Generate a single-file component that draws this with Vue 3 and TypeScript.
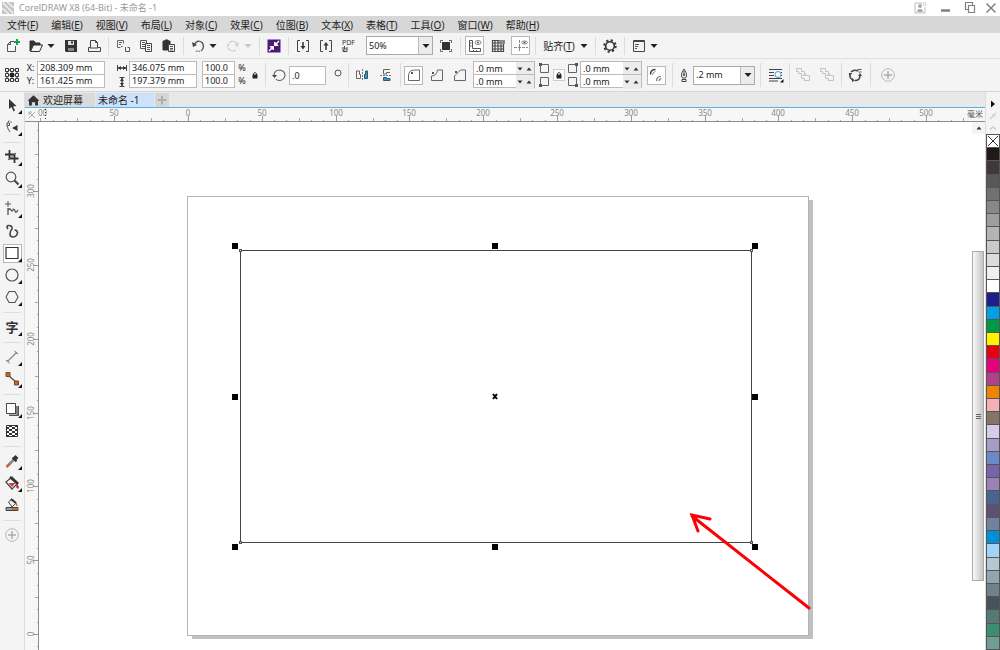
<script setup lang="ts">
import { ref } from 'vue'

interface Item {
  kind: 'icon' | 'arrow' | 'sep'
  icon?: string
  label?: string
  on?: boolean
  dim?: boolean
}
interface Tool {
  icon?: string
  label?: string
  fly?: boolean
}

const menus = [
  ['文件', 'F'], ['编辑', 'E'], ['视图', 'V'], ['布局', 'L'], ['对象', 'C'], ['效果', 'C'],
  ['位图', 'B'], ['文本', 'X'], ['表格', 'T'], ['工具', 'O'], ['窗口', 'W'], ['帮助', 'H'],
]

const icons: Record<string, string> = {
  logo: '<rect x="2" y="2" width="12" height="12" fill="#c4c4c4"/><path d="M3 3l10 10M7 2l7 6M2 8l7 6" stroke="#f2f2f2" stroke-width="1.6"/>',
  user: '<path d="M3 3h7M3 3v10h10V7" stroke="#bdbdbd"/><circle cx="8" cy="6" r="2" fill="#aaa" stroke="none"/><path d="M5 12q0-3 3-3t3 3z" fill="#aaa" stroke="none"/><circle cx="12.500" cy="4" r="1.500" stroke="#ccc"/>',
  min: '<path d="M4 10.500h9" stroke="#808080" stroke-width="2.500"/>',
  restore: '<path d="M6 9.500H3.500v-7h7V5M6.500 5.500h6v7h-6z" stroke="#808080" stroke-width="1.200"/>',
  close: '<path d="M3.500 3.500l9 9M12.500 3.500l-9 9" stroke="#808080" stroke-width="1.500"/>',
  new: '<path d="M9 3.500H5.500L2.500 6.500v7h8V8M5.500 3.500v3h-3" stroke="#555"/><path d="M12 1v6M9 4h6" stroke="#19a349" stroke-width="2"/>',
  open: '<path d="M2 13V3h4l1.500 2H12v2H5z" fill="#333" stroke="#333"/><path d="M2.500 13.500l3-6.500h9l-3 6.500z" fill="#f5f5f5" stroke="#333"/>',
  save: '<path d="M2 2h12v12H3l-1-1z" fill="#333" stroke="none"/><path d="M5 3h6v4H5z" fill="#ddd" stroke="none"/><path d="M8 3.500h2v2H8z" fill="#333" stroke="none"/><path d="M5 10h6v3H5z" fill="#888" stroke="none"/>',
  print: '<path d="M4.500 9.500v-7h5l2 2v5M9.500 2.500v2h2M4.500 9.500h-2v4h12v-4h-3" stroke="#444"/><path d="M4 10h8" stroke="#444"/>',
  cut: '<path d="M2.500 2.500h6v3M2.500 2.500v7h3M4 4.500h3M4 6.500h2" stroke="#666"/><path d="M6 8.500h1.500M10.500 9v4.500h4V9.500h-2" stroke="#555"/>',
  copy: '<path d="M2.500 2.500h6v8h-6zM4 4.500h3M4 6.500h3M4 8.500h3" stroke="#555"/><path d="M7.500 5.500h6v8h-6z" fill="#f4f4f4" stroke="#444"/><path d="M9 7.500h3M9 9.500h3M9 11.500h3" stroke="#555"/>',
  paste: '<path d="M2 3h2V2h3v1h2v3H7v6H2z" fill="#333" stroke="#333"/><path d="M7.500 6.500h6v7h-6z" fill="#f4f4f4" stroke="#444"/><path d="M9 8.500h3M9 10.500h3M9 12h3" stroke="#555"/>',
  undo: '<path d="M4 6.500Q8 1 12 4.500q3 4 0 7.500" stroke="#555" stroke-width="1.400"/><path d="M12 12q-3 2.500-7 .5" stroke="#777" stroke-width="1.400" stroke-dasharray="1.500 1"/><path d="M2 4l1 5 4-2z" fill="#444" stroke="none"/>',
  redo: '<path d="M12 6Q8 1 4 5q-3 4 1 7 3 2 6 0" stroke="#ccc" stroke-width="1.400" stroke-dasharray="4 1"/><path d="M14 4l-1 5-4-2z" fill="#d4d4d4" stroke="none"/>',
  connect: '<path d="M1.500 1.500h13v13h-13z" fill="#4b1a78" stroke="none"/><path d="M13 3L9.500 6.500M3 13l3.500-3.500" stroke="#fff" stroke-width="1.500"/><path d="M8.500 4v3.500H12zM7.500 12V8.500H4z" fill="#fff" stroke="#fff"/>',
  import: '<path d="M5 2.500H2.500v11H5M11 2.500h2.500v11H11" stroke="#444"/><path d="M8 4v6" stroke="#333" stroke-width="1.500"/><path d="M5.500 8h5L8 11.500z" fill="#333" stroke="none"/>',
  export: '<path d="M5 2.500H2.500v11H5M11 2.500h2.500v11H11" stroke="#444"/><path d="M8 6v6" stroke="#333" stroke-width="1.500"/><path d="M5.500 7.500h5L8 4z" fill="#333" stroke="none"/>',
  pdf: '<text x="1" y="7" font-size="7" font-family="Noto Sans" fill="#333" stroke="none">PDF</text><path d="M2 9v4.500h4V9M3.500 8v3h2M3 13V11.500" stroke="#444"/>',
  full: '<path d="M4 4h8v8H4z" fill="#333" stroke="none"/><path d="M2.500 5V2.500H5M11 2.500h2.500V5M2.500 11v2.500H5M11 13.500h2.500V11" stroke="#666"/>',
  ruler: '<path d="M2.500 2.500h3v8h8v3h-11z" stroke="#555"/><path d="M3 5h1.500M3 8h1.500M6.500 12v1.500M9.500 12v1.500" stroke="#555"/><ellipse cx="11" cy="4.500" rx="3" ry="2" stroke="#888"/><circle cx="11" cy="4.500" r="1" fill="#555" stroke="none"/>',
  grid: '<path d="M2.500 2.500h11v11h-11zM5 2v12M8 2v12M11 2v12M2 5h12M2 8h12M2 11h12" stroke="#4a4a4a" stroke-width="1.200"/><path d="M9 2h6v4H9z" fill="#888" stroke="none"/>',
  guides: '<path d="M6.500 2v12M1 9.500h14" stroke="#888" stroke-dasharray="3 1"/><ellipse cx="11.500" cy="4.500" rx="3" ry="1.500" stroke="#888"/><circle cx="11.500" cy="4.500" r="1" fill="#555" stroke="none"/>',
  gear: '<circle cx="8" cy="8" r="4.300" stroke="#333" stroke-width="1.600"/><circle cx="8" cy="8" r="5.800" stroke="#333" stroke-width="1.800" stroke-dasharray="2.200 2.355"/>',
  window: '<path d="M2.500 2.500h11v11h-11z" stroke="#444"/><path d="M2 3.500h12" stroke="#444"/><path d="M4 6.500h4M4 8.500h3M4 10.500h2" stroke="#555"/>',
  origin: '<path d="M3 3h10v10H3zM8 3v10M3 8h10" stroke="#333"/><path d="M1.500 1.500h3v3h-3zM6.500 1.500h3v3h-3zM11.500 1.500h3v3h-3zM1.500 6.500h3v3h-3zM11.500 6.500h3v3h-3zM1.500 11.500h3v3h-3zM6.500 11.500h3v3h-3zM11.500 11.500h3v3h-3z" fill="#f4f4f4" stroke="#333"/><path d="M6 6h4v4H6z" fill="#222" stroke="none"/>',
  lock: '<path d="M5.500 7.500h5v4h-5z" fill="#222" stroke="none"/><path d="M6.500 8V6.500q1.500-2 3 0V8" stroke="#333"/>',
  rotate: '<path d="M3 9q0-6 6-6 5 1 5 5.500-1 5-6 5-2 0-3-1.500" stroke="#666" stroke-width="1.200"/><path d="M1 8h5l-2.500 3z" fill="#444" stroke="none"/>',
  mirrorH: '<path d="M2.500 4v7.500h4v-4h-1V4z" stroke="#666"/><path d="M8.500 2v12" stroke="#777" stroke-dasharray="2 1"/><path d="M13.500 4v7.500h-3v-4h1V4z" fill="#2d9ad6" stroke="#33566e"/>',
  mirrorV: '<path d="M12 2.500H5.500V7h3V5.500H12" stroke="#666"/><path d="M2 8.500h12" stroke="#777" stroke-dasharray="2 1"/><path d="M12 13.500H5.500v-3h3v1H12z" fill="#2d9ad6" stroke="#33566e"/>',
  round: '<path d="M2.500 13.500V9q0-6 6-6h5v10.500z" stroke="#666"/><path d="M5 5h2v2H5z" fill="#555" stroke="none"/>',
  scallop: '<path d="M2.500 13.500V9q5 0 6-6h5v10.500z" stroke="#666"/><path d="M3 5h2v2H3z" fill="#555" stroke="none"/>',
  chamfer: '<path d="M2.500 13.500V9l6-6h5v10.500z" stroke="#666"/><path d="M3 4h2v2H3z" fill="#555" stroke="none"/>',
  relative: '<path d="M2.500 7.500q0-5 5-5" stroke="#444" stroke-width="1.600"/><path d="M4.500 8q0-3 3-3.500" stroke="#888"/><path d="M8.500 14q0-4.500 4.500-4.500M11 14q0-2 2.500-2.500" stroke="#777" stroke-width="1.200"/>',
  pen: '<path d="M8 2q-3 4-2.500 7l1 2h3l1-2Q11 6 8 2zM8 4v4M6 12.500h4v2H6z" stroke="#444"/><circle cx="8" cy="8" r="1" fill="#444" stroke="none"/>',
  wrap: '<path d="M1 2.500h13M1 5.500h5M1 8.500h5M1 11.500h13M1 14h9" stroke="#444" stroke-width="1.200"/><path d="M13 5.500h1M13 8.500h1" stroke="#444"/><circle cx="10" cy="7.500" r="3" fill="#fff" stroke="#39a0d5"/><path d="M15.500 12v3.500H12z" fill="#111" stroke="none"/>',
  combine: '<path d="M1.500 1.500h5v3h3v4h-3v-2h-3v-2h-2zM6.500 8.500h3v-2h1v2h4v5h-5v-2h-3z" stroke="#c2c2c2"/>',
  cycle: '<path d="M11 4Q7 2 4 5M3 7q-1 4 3 6M8 13.500q5 0 5-5" stroke="#444" stroke-width="1.500"/><path d="M10.500 2.500h4M11.500 5h3" stroke="#555"/><path d="M11 9h4l-2-3zM5 11v4l3-1.500zM1.500 6H5l-1.500 3z" fill="#444" stroke="none"/>',
  plus: '<circle cx="8" cy="8" r="6.300" stroke="#b5b5b5"/><path d="M8 4v8M4 8h8" stroke="#aaa" stroke-width="1.500"/>',
  pick: '<path d="M5 2v10l2.500-2 2 4.500 1.500-1-2-4 3.500-.500z" fill="#333" stroke="none"/>',
  shape: '<path d="M5 1.500Q1 7 6 13" stroke="#555"/><path d="M3 4h2.500v2.500H3z" fill="#f4f4f4" stroke="#555"/><path d="M8 9l5.500-3v6z" fill="#333" stroke="none"/><path d="M6 2.500l2 1" stroke="#777"/>',
  crop: '<path d="M5.500 1v8.500h9M1 5.500h9.500V14" stroke="#333" stroke-width="1.800"/><path d="M4 11L12 4" stroke="#555"/>',
  zoom: '<circle cx="7" cy="6" r="4.800" stroke="#555" stroke-width="1.200"/><path d="M10.500 9.500l4 4" stroke="#444" stroke-width="2.200"/>',
  freehand: '<path d="M4 0v6M1 3h6" stroke="#555"/><path d="M4 7v7M4 9q2-2 3 0t2 0 2 1 3-1" stroke="#555" stroke-width="1.300"/>',
  smear: '<path d="M4 6Q1.500 2.500 5 2.500q3.500 0 3 3.500-2 2-2 5 0 3 3 3 4-.500 4.500-4 0-3-3-3" stroke="#444" stroke-width="1.600"/>',
  rect: '<path d="M2 2.500h12v11H2z" fill="#fff" stroke="#333" stroke-width="1.200"/>',
  ellipse: '<circle cx="8" cy="8" r="6" stroke="#555" stroke-width="1.200"/>',
  polygon: '<path d="M5 2.500h6L14 8l-3 5.500H5L2 8z" stroke="#555" stroke-width="1.100"/>',
  dimension: '<path d="M3.500 12.500l9-9" stroke="#888" stroke-width="1.300"/><path d="M2 11l3.500 3M10.500 2L14 5" stroke="#666"/>',
  connector: '<path d="M4 4l9 8" stroke="#555" stroke-width="1.300"/><path d="M2 1.500h4v4H2zM10.500 10h4v4h-4z" fill="#c8692e" stroke="#804020"/>',
  shadow: '<path d="M5 5h10v10H5z" fill="#555" stroke="none"/><path d="M2.500 2.500h9v10h-9z" fill="#fff" stroke="#444"/><path d="M5 13.500h8V5" stroke="#aaa"/>',
  pattern: '<path d="M2.500 2.500h11v11h-11z" fill="#fff" stroke="#333"/><path d="M2 4h3v2H2zM8 4h3v2H8zM2 8h3v2H2zM8 8h3v2H8zM5 6h3v2H5zM11 6h3v2h-3zM5 10h3v2H5zM11 10h3v2h-3zM5 2h3v2H5zM11 2h3v2h-3zM2 12h3v2H2zM8 12h3v2H8z" fill="#333" stroke="none"/>',
  dropper: '<path d="M2.500 14L6 10.500" stroke="#c36437" stroke-width="2.500"/><path d="M5.500 11l5-5" stroke="#888" stroke-width="2.500"/><path d="M8.500 4.500l4 4" stroke="#333" stroke-width="2"/><path d="M10.500 6l2.500-2.500" stroke="#333" stroke-width="4"/>',
  fill: '<path d="M2 7l6-5 6 6-6 6z" fill="#fff" stroke="#444" stroke-width="1.200"/><path d="M6 2l8 7" stroke="#333" stroke-width="2.500"/><path d="M4.500 8h7L8 12z" fill="#d93344" stroke="none"/><path d="M13 9l2 3-1 2-2-2z" fill="#d0202c" stroke="none"/>',
  smart: '<path d="M4.500 5L8 2l4 4-4 4z" fill="#eee" stroke="#444"/><path d="M7 2l5 4" stroke="#333" stroke-width="2"/><path d="M12 6l1 3" stroke="#d06a20" stroke-width="1.500"/><path d="M2 10.500h12v3H2z" fill="#999" stroke="#444"/><path d="M8 11h5.500v2H8z" fill="#c8692e" stroke="none"/>',
  home: '<path d="M1 8l7-6.500L15 8l-1.500.500V14H10v-4H6v4H2.500V8.500z" fill="#333" stroke="none"/>',
  arrow: '<path d="M.5 6h7L4 10z" fill="#222" stroke="none"/>',
  up: '<path d="M1.500 7.500h5L4 4.500z" fill="#333" stroke="none"/>',
  down: '<path d="M1.500 4.500h5L4 7.500z" fill="#333" stroke="none"/>',
  width: '<path d="M1.500 3v6M10.500 3v6" stroke="#444"/><path d="M2 6h8" stroke="#444" stroke-width="1.500"/><path d="M2 6l3-2v4zM10 6L7 4v4z" fill="#333" stroke="none"/>',
  height: '<path d="M3.500 1.500h5M3.500 10.500h5" stroke="#444"/><path d="M6 2v8" stroke="#444" stroke-width="1.500"/><path d="M6 2L4 5h4zM6 10L4 7h4z" fill="#333" stroke="none"/>',
}

const s: Item = { kind: 'sep' }
const i = (icon: string, label: string, on = false, dim = false): Item => ({ kind: 'icon', icon, label, on, dim })
const a = (label: string, dim = false): Item => ({ kind: 'arrow', label, dim })

const barA: Item[] = [
  i('new', '新建'), i('open', '打开'), a('打开列表'), i('save', '保存'), i('print', '打印'), s,
  i('cut', '剪切'), i('copy', '复制'), i('paste', '粘贴'), s,
  i('undo', '撤消'), a('撤消列表'), i('redo', '重做'), a('重做列表', true), s,
  i('connect', '搜索内容'), s, i('import', '导入'), i('export', '导出'), i('pdf', '发布为 PDF'),
]
const barB: Item[] = [
  i('full', '全屏预览'), s, i('ruler', '显示标尺', true), i('grid', '显示网格'), i('guides', '显示辅助线', true), s,
]
const barC: Item[] = [
  a('贴齐列表'), s, i('gear', '选项'), s, i('window', '应用程序启动器'), a('启动器列表'),
]

const t = (icon: string, label: string, fly = true): Tool => ({ icon, label, fly })
const tools: Tool[] = [
  t('pick', '选择'), t('shape', '形状'), {}, t('crop', '裁剪'), t('zoom', '缩放'), {},
  t('freehand', '手绘'), t('smear', '艺术笔', false), t('rect', '矩形'), t('ellipse', '椭圆形'), t('polygon', '多边形'), {},
  t('text', '文本'), {}, t('dimension', '平行度量'), t('connector', '连接器'), {},
  t('shadow', '阴影'), t('pattern', '透明度', false), {},
  t('dropper', '颜色滴管'), t('fill', '交互式填充'), t('smart', '智能填充', false), {}, t('plus', '自定义', false),
]
const active = ref('rect')

const posX = ref('208.309 mm')
const posY = ref('161.425 mm')
const sizeW = ref('346.075 mm')
const sizeH = ref('197.379 mm')
const scaleX = ref('100.0')
const scaleY = ref('100.0')
const angle = ref('.0')
const radii = ref(['.0 mm', '.0 mm', '.0 mm', '.0 mm'])

const unit = 73.8
const hMajors = Array.from({ length: 12 }, (_, k) => k - 1).map((n) => ({ pos: Math.round(163 + n * unit), text: String(Math.abs(n * 50)) }))
const hMinors = Array.from({ length: 76 }, (_, k) => k - 12).map((n) => ({ pos: Math.round(163 + (n * unit) / 6), len: n % 3 === 0 ? 3 : 1 })).filter((m) => m.pos > 14)
const vMajors = Array.from({ length: 7 }, (_, n) => ({ pos: Math.round(512 - n * unit), text: String(n * 50) }))
const vMinors = Array.from({ length: 43 }, (_, k) => k - 1).map((n) => ({ pos: Math.round(512 - (n * unit) / 6), len: n % 3 === 0 ? 3 : 1 }))

const handles = [50, 201, 351].flatMap((y) => [48, 308, 568].map((x) => ({ x, y }))).filter((h) => !(h.x === 308 && h.y === 201))
const nodes = [[53, 54], [564, 54], [53, 346], [564, 346]]

const swatches = [
  '#211915', '#3e3938', '#595757', '#727171', '#888888', '#9e9e9f', '#b4b4b5', '#c9c9ca', '#dcdcdd', '#efefef', '#ffffff',
  '#1d2088', '#00a0e9', '#009944', '#fff100', '#e60012', '#e4007f', '#b04088', '#f08300', '#f4b0b4', '#86746a', '#d4cce8',
  '#a79bc8', '#6c88c5', '#7764ad', '#9a82b4', '#4a6392', '#5c5172', '#7082a0', '#0090d8', '#a0d5f7', '#b4c8d4', '#92a5ad',
  '#71808b', '#46525c', '#557973', '#3d8d71', '#729d96',
]
</script>

<template>
  <div class="app">
    <header class="title">
      <svg class="ic" viewBox="0 0 16 16" v-html="icons.logo" />
      <h1>CorelDRAW X8 (64-Bit) - 未命名 -1</h1>
      <button v-for="w in ['user', 'min', 'restore', 'close']" :key="w" class="win" :aria-label="w">
        <svg class="ic" viewBox="0 0 16 16" v-html="icons[w]" />
      </button>
    </header>

    <nav class="menu">
      <button v-for="m in menus" :key="m[0]">{{ m[0] }}(<u>{{ m[1] }}</u>)</button>
    </nav>

    <div class="bar">
      <template v-for="(it, k) in barA" :key="k">
        <span v-if="it.kind === 'sep'" class="sep" />
        <button v-else-if="it.kind === 'arrow'" :class="['cell arrow', { dim: it.dim }]" :aria-label="it.label">
          <svg class="tri" viewBox="0 0 8 16" v-html="icons.arrow" />
        </button>
        <button v-else class="cell icon" :aria-label="it.label">
          <svg class="ic" viewBox="0 0 16 16" v-html="icons[it.icon || '']" />
        </button>
      </template>
      <div class="combo level">
        <select aria-label="缩放级别"><option>50%</option><option>100%</option></select>
        <span class="drop"><svg class="tri" viewBox="0 0 8 16" v-html="icons.arrow" /></span>
      </div>
      <template v-for="(it, k) in barB" :key="k">
        <span v-if="it.kind === 'sep'" class="sep" />
        <button v-else :class="['cell icon', { on: it.on }]" :aria-label="it.label">
          <svg class="ic" viewBox="0 0 16 16" v-html="icons[it.icon || '']" />
        </button>
      </template>
      <button class="snap">贴齐(<u>T</u>)</button>
      <template v-for="(it, k) in barC" :key="k">
        <span v-if="it.kind === 'sep'" class="sep" />
        <button v-else-if="it.kind === 'arrow'" class="cell arrow" :aria-label="it.label">
          <svg class="tri" viewBox="0 0 8 16" v-html="icons.arrow" />
        </button>
        <button v-else class="cell icon" :aria-label="it.label">
          <svg class="ic" viewBox="0 0 16 16" v-html="icons[it.icon || '']" />
        </button>
      </template>
    </div>

    <div class="props">
      <button class="slot" aria-label="对象原点"><svg class="ic" viewBox="0 0 16 16" v-html="icons.origin" /></button>
      <div class="stack names"><label for="px">X:</label><label for="py">Y:</label></div>
      <div class="stack"><input id="px" v-model="posX"><input id="py" v-model="posY"></div>
      <div class="stack marks">
        <svg viewBox="0 0 12 12" v-html="icons.width" /><svg viewBox="0 0 12 12" v-html="icons.height" />
      </div>
      <div class="stack"><input v-model="sizeW" aria-label="宽度"><input v-model="sizeH" aria-label="高度"></div>
      <span />
      <div class="stack"><input v-model="scaleX" aria-label="水平缩放"><input v-model="scaleY" aria-label="垂直缩放"></div>
      <div class="stack names"><span>%</span><span>%</span></div>
      <button class="slot" aria-label="锁定比率"><svg class="ic" viewBox="0 0 16 16" v-html="icons.lock" /></button>
      <span class="rule" />
      <span class="slot"><svg class="ic" viewBox="0 0 16 16" v-html="icons.rotate" /></span>
      <input v-model="angle" class="single" aria-label="旋转角度">
      <span class="slot"><svg class="ic" viewBox="0 0 16 16"><circle cx="10" cy="6" r="3" stroke="#555" /></svg></span>
      <span class="rule" />
      <button class="slot" aria-label="水平镜像"><svg class="ic" viewBox="0 0 16 16" v-html="icons.mirrorH" /></button>
      <button class="slot" aria-label="垂直镜像"><svg class="ic" viewBox="0 0 16 16" v-html="icons.mirrorV" /></button>
      <span class="rule" />
      <button class="slot on" aria-label="圆角"><svg class="ic" viewBox="0 0 16 16" v-html="icons.round" /></button>
      <button class="slot" aria-label="扇形角"><svg class="ic" viewBox="0 0 16 16" v-html="icons.scallop" /></button>
      <button class="slot" aria-label="倒棱角"><svg class="ic" viewBox="0 0 16 16" v-html="icons.chamfer" /></button>
      <span />
      <div class="stack">
        <div v-for="n in [0, 1]" :key="n" class="spin">
          <input v-model="radii[n]" :aria-label="'转角半径 ' + (n + 1)">
          <button aria-label="减少"><svg viewBox="0 0 8 12" v-html="icons.down" /></button>
          <button aria-label="增加"><svg viewBox="0 0 8 12" v-html="icons.up" /></button>
        </div>
      </div>
      <div class="stack corners">
        <svg viewBox="0 0 12 12"><path d="M2.500 2.500h8v8h-8z" stroke="#666" /><path d="M1 1h3v3H1z" fill="#555" /></svg>
        <svg viewBox="0 0 12 12"><path d="M2.500 1.500h8v8h-8z" stroke="#666" /><path d="M1 8h3v3H1z" fill="#555" /></svg>
      </div>
      <button class="slot boxed" aria-label="同时编辑所有角"><svg class="ic" viewBox="0 0 16 16" v-html="icons.lock" /></button>
      <div class="stack corners">
        <svg viewBox="0 0 12 12"><path d="M1.500 2.500h8v8h-8z" stroke="#666" /><path d="M8 1h3v3H8z" fill="#555" /></svg>
        <svg viewBox="0 0 12 12"><path d="M1.500 1.500h8v8h-8z" stroke="#666" /><path d="M8 8h3v3H8z" fill="#555" /></svg>
      </div>
      <div class="stack">
        <div v-for="n in [2, 3]" :key="n" class="spin">
          <input v-model="radii[n]" :aria-label="'转角半径 ' + (n + 1)">
          <button aria-label="减少"><svg viewBox="0 0 8 12" v-html="icons.down" /></button>
          <button aria-label="增加"><svg viewBox="0 0 8 12" v-html="icons.up" /></button>
        </div>
      </div>
      <button class="slot on" aria-label="相对角缩放"><svg class="ic" viewBox="0 0 16 16" v-html="icons.relative" /></button>
      <span class="rule" />
      <span class="slot"><svg class="ic" viewBox="0 0 16 16" v-html="icons.pen" /></span>
      <div class="combo">
        <select aria-label="轮廓宽度"><option>.2 mm</option><option>.5 mm</option></select>
        <span class="drop"><svg class="tri" viewBox="0 0 8 16" v-html="icons.arrow" /></span>
      </div>
      <span class="rule" />
      <button class="slot" aria-label="文本换行"><svg class="ic" viewBox="0 0 16 16" v-html="icons.wrap" /></button>
      <span class="rule" />
      <button class="slot" aria-label="到图层前面"><svg class="ic" viewBox="0 0 16 16" v-html="icons.combine" /></button>
      <button class="slot" aria-label="到图层后面"><svg class="ic" viewBox="0 0 16 16" v-html="icons.combine" /></button>
      <span class="rule" />
      <button class="slot" aria-label="转换为曲线"><svg class="ic" viewBox="0 0 16 16" v-html="icons.cycle" /></button>
      <span class="rule" />
      <button class="slot" aria-label="自定义"><svg class="ic" viewBox="0 0 16 16" v-html="icons.plus" /></button>
    </div>

    <div class="body">
      <aside class="tools">
        <template v-for="(tool, k) in tools" :key="k">
          <hr v-if="!tool.icon">
          <button v-else :class="{ on: active === tool.icon }" :aria-label="tool.label" @click="active = tool.icon">
            <span v-if="tool.icon === 'text'" class="glyph">字</span>
            <svg v-else class="ic" viewBox="0 0 16 16" v-html="icons[tool.icon]" />
            <span v-if="tool.fly" class="fly" />
          </button>
        </template>
      </aside>

      <main class="doc">
        <div class="tabs">
          <button class="tab"><svg class="ic" viewBox="0 0 16 16" v-html="icons.home" />欢迎屏幕</button>
          <button class="tab current">未命名 -1</button>
          <button class="add" aria-label="新建文档"><svg class="ic" viewBox="0 0 16 16"><path d="M8 3v10M3 8h10" stroke="#aaa" stroke-width="2" /></svg></button>
        </div>
        <svg class="hruler">
          <path d="M4 10l6-6M4 4l6 6M4 4h3M4 4v3" stroke="#aaa" />
          <rect v-for="(m, k) in hMinors" :key="k" :x="m.pos" :y="13 - m.len" width="1" :height="m.len" fill="#a4a4a4" />
          <rect v-for="m in hMajors" :key="m.pos" :x="m.pos" y="8" width="1" height="5" fill="#999" />
          <text v-for="m in hMajors" :key="m.text + m.pos" :x="m.pos" y="8" text-anchor="middle">{{ m.text }}</text>
          <text x="13" y="8">00</text>
          <path d="M20.500 1v12" stroke="#333" stroke-dasharray="1 2" />
          <text x="958" y="9" text-anchor="end" class="unit">毫米</text>
        </svg>
        <div class="work">
          <svg class="vruler">
            <rect v-for="(m, k) in vMinors" :key="k" :x="13 - m.len" :y="m.pos" :width="m.len" height="1" fill="#a4a4a4" />
            <rect v-for="m in vMajors" :key="m.pos" x="8" :y="m.pos" width="5" height="1" fill="#999" />
            <text v-for="m in vMajors" :key="m.text" :transform="`translate(9 ${m.pos}) rotate(-90)`" text-anchor="middle">{{ m.text }}</text>
          </svg>
          <div class="canvas">
            <svg class="drawing">
              <g transform="translate(148 74)">
                <rect x="5" y="4" width="621" height="439" fill="#c0c0c0" />
                <rect x="0" y="0" width="621" height="439" fill="#fff" stroke="#b4b4b4" transform="translate(.5 .5)" />
                <rect x="53" y="54" width="511" height="292" stroke="#444" transform="translate(.5 .5)" />
                <rect v-for="n in nodes" :key="n.join()" :x="n[0] - 1" :y="n[1] - 1" width="2" height="2" fill="#ccc" stroke="#555" transform="translate(.5 .5)" />
                <rect v-for="h in handles" :key="h.x + '-' + h.y" :x="h.x - 3" :y="h.y - 3" width="6" height="6" fill="#000" />
                <path d="M306 198l4 5M310 198l-4 5" stroke="#000" stroke-width="2" />
                <path d="M622 412L505 320M523 323L505 319L511 335" stroke="#fb0006" stroke-width="3" stroke-linecap="round" />
              </g>
            </svg>
            <div class="scroll">
              <button aria-label="向上滚动"><svg viewBox="0 0 8 12" v-html="icons.up" /></button>
              <div class="thumb"><i /><i /><i /></div>
            </div>
          </div>
        </div>
      </main>

      <aside class="palette">
        <button aria-label="调色板菜单"><svg viewBox="0 0 12 12"><path d="M4 2.500v7l4-3.500z" fill="#111" /></svg></button>
        <button aria-label="滴管"><svg viewBox="0 0 12 12"><path d="M3 9l4-4M6 4l2 2M8 4l1-1" stroke="#ccc" stroke-width="1.500" /></svg></button>
        <button aria-label="向上"><svg viewBox="0 0 12 12"><path d="M3 7.500L6 5l3 2.500" stroke="#ccc" stroke-width="1.500" /></svg></button>
        <div class="swatches">
          <button aria-label="无填充"><svg viewBox="0 0 12 12"><path d="M1 1l10 10M11 1L1 11" stroke="#333" /></svg></button>
          <button v-for="c in swatches" :key="c" :style="{ background: c }" :aria-label="c" />
        </div>
      </aside>
    </div>
  </div>
</template>

<style>
body {
  margin: 0;
  overflow: hidden;
}
</style>

<style scoped>
.app {
  display: flex;
  flex-direction: column;
  height: 100vh;
  background: #f4f4f4;
  color: #222;
  font: 10px/14px "Noto Sans", "Noto Sans CJK SC", sans-serif;
}
* {
  box-sizing: border-box;
}
button, input, select {
  margin: 0;
  padding: 0;
  border: 0;
  border-radius: 0;
  background: none;
  color: inherit;
  font: inherit;
}
svg {
  display: block;
  flex: none;
  fill: none;
}
.ic {
  width: 16px;
  height: 16px;
}
.tri {
  width: 8px;
  height: 16px;
}
.title {
  display: flex;
  align-items: center;
  height: 16px;
  background: #fff;
  color: #999;
}
.title h1 {
  flex: 1;
  margin: 0;
  padding-left: 3px;
  font: inherit;
  font-size: 9px;
}
.win {
  width: 25px;
}
.win:last-child {
  width: 18px;
}
.win .ic {
  margin: auto;
}
.menu {
  display: flex;
  gap: 13px;
  height: 17px;
  padding: 0 7px;
  background: #d7d7d7;
  white-space: nowrap;
}
.bar {
  display: flex;
  align-items: center;
  height: 26px;
  padding-left: 1px;
  border-bottom: 1px solid #e0e0e0;
}
.cell {
  display: flex;
  align-items: center;
  justify-content: center;
  height: 20px;
}
.cell.icon {
  width: 23px;
}
.cell.arrow {
  justify-content: flex-start;
  width: 12px;
}
.cell.dim {
  opacity: 0.2;
}
.sep {
  width: 6px;
  height: 18px;
  background: linear-gradient(#dcdcdc, #dcdcdc) center / 1px 100% no-repeat;
}
.on {
  background: linear-gradient(#fff, #fff) center / 17px 17px no-repeat, linear-gradient(#b8b8b8, #b8b8b8) center / 19px 19px no-repeat;
}
.snap {
  width: 42px;
  white-space: nowrap;
}
.combo {
  display: grid;
  grid-template-columns: 1fr 14px;
  height: 19px;
  border: 1px solid #aaa;
  background: #fff;
}
.level {
  width: 67px;
  margin: 0 1px 0 6px;
  font-size: 9px;
}
.combo select {
  grid-area: 1 / 1 / 2 / 3;
  min-width: 0;
  padding-left: 2px;
  appearance: none;
}
.combo .drop {
  display: flex;
  grid-area: 1 / 2;
  align-items: center;
  justify-content: center;
  border-left: 1px solid #bbb;
  background: #ececec;
  pointer-events: none;
}
.props {
  display: grid;
  grid-template-columns: 24px 13px 68px 24px 68px 5px 33px 14px 12px 8px 20px 37px 20px 4px 24px 24px 4px 23px 23px 23px 2px 62px 18px 12px 15px 62px 28px 4px 19px 62px 10px 22px 4px 24px 24px 4px 24px 6px 30px;
  align-items: center;
  height: 33px;
  border-bottom: 1px solid #d6d6d6;
}
.props input, .props .combo, .names {
  font-size: 9px;
}
.slot {
  display: flex;
  align-items: center;
  justify-content: center;
  height: 20px;
}
.boxed {
  height: 12px;
  border: 1px solid #ccc;
  background: #fff;
}
.rule {
  height: 24px;
  background: linear-gradient(#dcdcdc, #dcdcdc) center / 1px 100% no-repeat;
}
.stack {
  display: grid;
  grid-template-rows: 14px 14px;
}
.stack > input, .spin {
  width: 100%;
  min-width: 0;
  height: 14px;
  padding-left: 2px;
  border: 1px solid #bbb;
  background: #fff;
}
.stack > :nth-child(2) {
  margin-top: -1px;
}
.single {
  width: 100%;
  height: 19px;
  padding-left: 2px;
  border: 1px solid #bbb;
  background: #fff;
}
.names {
  justify-items: center;
}
.marks, .corners {
  justify-content: center;
  align-items: center;
}
.marks {
  justify-content: end;
  padding-right: 1px;
}
.marks svg, .corners svg {
  width: 12px;
  height: 12px;
}
.stack > .spin {
  display: grid;
  grid-template-columns: 1fr 9px 9px;
  padding-left: 0;
}
.spin input {
  min-width: 0;
  padding-left: 2px;
}
.spin button {
  background: #ececec;
}
.spin svg {
  width: 8px;
  height: 12px;
}
.body {
  display: flex;
  flex: 1;
  min-height: 0;
}
.tools {
  display: flex;
  flex: none;
  flex-direction: column;
  align-items: center;
  width: 25px;
  padding-top: 2px;
  border-right: 1px solid #ddd;
}
.tools button {
  display: flex;
  position: relative;
  flex: none;
  align-items: center;
  justify-content: center;
  width: 22px;
  height: 22px;
}
.glyph {
  color: #333;
  font: 700 13px/20px "Noto Sans CJK SC", sans-serif;
}
.fly {
  position: absolute;
  right: 1px;
  bottom: 2px;
  border: 2px solid #111;
  border-top-color: transparent;
  border-left-color: transparent;
}
.tools hr {
  flex: none;
  width: 18px;
  height: 8px;
  margin: 0;
  border: 0;
  background: linear-gradient(#dedede, #dedede) center / 100% 1px no-repeat;
}
.doc {
  display: flex;
  flex: 1;
  flex-direction: column;
  min-width: 0;
}
.tabs {
  display: flex;
  height: 16px;
  padding-top: 1px;
  gap: 1px;
  border-bottom: 1px solid #55b5e0;
  background: #e8e8e8;
}
.tab {
  display: flex;
  align-items: center;
  gap: 3px;
  width: 70px;
  padding-left: 2px;
  background: #dadada;
  white-space: nowrap;
}
.tab .ic {
  width: 13px;
  height: 13px;
}
.tab.current {
  width: 58px;
  background: #cde1fb;
}
.add {
  width: 14px;
  background: #d6d6d6;
}
.add .ic {
  width: 14px;
  height: 14px;
}
.hruler {
  width: 100%;
  height: 14px;
  border-bottom: 1px solid #8e8e8e;
  background: #f7f7f7;
}
.hruler text, .vruler text {
  fill: #888;
  font-size: 8px;
}
.hruler .unit {
  fill: #555;
}
.work {
  display: flex;
  flex: 1;
  min-height: 0;
}
.vruler {
  width: 14px;
  height: 100%;
  border-right: 1px solid #8e8e8e;
  background: #f7f7f7;
}
.canvas {
  display: flex;
  flex: 1;
  min-width: 0;
  background: #fff;
}
.drawing {
  flex: 1;
  min-width: 0;
  height: 100%;
}
.scroll {
  display: flex;
  flex-direction: column;
  width: 13px;
}
.scroll button {
  height: 12px;
  background: #f4f4f4;
}
.scroll svg {
  width: 8px;
  height: 12px;
  margin: auto;
}
.thumb {
  display: flex;
  flex-direction: column;
  align-items: center;
  justify-content: center;
  gap: 1px;
  width: 12px;
  height: 62.5%;
  margin-top: 117px;
  border: 1px solid #aaa;
  background: linear-gradient(90deg, #fafafa, #c4c4c4);
}
.thumb i {
  width: 5px;
  height: 1px;
  background: #666;
}
.palette {
  display: flex;
  flex: none;
  flex-direction: column;
  width: 15px;
  padding-top: 6px;
  border-left: 1px solid #ddd;
}
.palette > button {
  flex: none;
  height: 12px;
}
.palette svg {
  width: 12px;
  height: 12px;
  margin: auto;
}
.swatches {
  display: flex;
  flex: 1;
  flex-direction: column;
  min-height: 0;
  background: #fff;
}
.swatches button {
  flex: 1;
  min-height: 0;
  border: 1px solid #555;
  border-top-width: 0;
}
.swatches button:first-child {
  border-top-width: 1px;
}
</style>
